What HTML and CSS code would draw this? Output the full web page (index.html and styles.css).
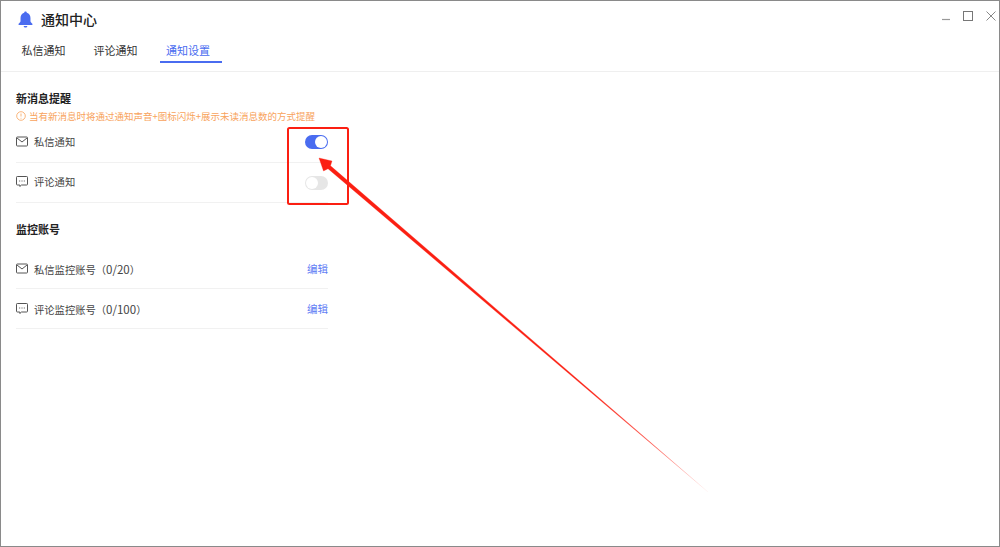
FILE: index.html
```html
<!DOCTYPE html>
<html lang="zh-CN">
<head>
<meta charset="utf-8">
<title>通知中心</title>
<link rel="stylesheet" href="styles.css">
</head>
<body>
<div class="window">
  <header class="header">
    <div class="titlebar">
      <div class="brand">
        <svg class="bell" viewBox="0 0 16 18"><path d="M8 0.500c.8 0 1.300.5 1.400 1.200C12 2.400 13.300 4.600 13.300 7.300v3.400c0 1 .8 1.900 2 2.900.5.500.2 1.200-.5 1.200H1.200c-.7 0-1-.7-.5-1.200 1.200-1 2-1.900 2-2.900V7.300c0-2.700 1.300-4.900 3.900-5.600C6.700 1 7.200.5 8 .5z" fill="#4a6cf0"/><path d="M6 15.800h4c-.2 1-1 1.700-2 1.700s-1.800-.7-2-1.700z" fill="#4a6cf0"/></svg>
        <span class="title">通知中心</span>
      </div>
      <div class="controls">
        <svg class="ctl" viewBox="0 0 10 10"><path d="M1 8.500h8" stroke="#999" stroke-width="1.200"/></svg>
        <svg class="ctl ctl-max" viewBox="0 0 10 10"><rect x=".5" y=".5" width="9" height="9" fill="none" stroke="#777"/></svg>
        <svg class="ctl" viewBox="0 0 10 10"><path d="M.5 .5l9 9M9.500 .5l-9 9" stroke="#888" fill="none"/></svg>
      </div>
    </div>
    <nav class="tabs">
      <span class="tab">私信通知</span>
      <span class="tab">评论通知</span>
      <span class="tab active">通知设置</span>
    </nav>
  </header>
  <main class="content">
    <section class="section-a">
      <h2 class="heading">新消息提醒</h2>
      <p class="notice">
        <svg class="notice-icon" viewBox="0 0 10 10"><circle cx="5" cy="5" r="4.300" fill="none" stroke="#f8a35c" stroke-width=".8"/><path d="M5 2.500v3M5 6.800v.8" stroke="#f8a35c" stroke-width=".8"/></svg>
        当有新消息时将通过通知声音+图标闪烁+展示未读消息数的方式提醒
      </p>
      <div class="row row-a">
        <div class="label">
          <svg class="icon" viewBox="0 0 12 10"><rect x=".5" y=".5" width="11" height="9" rx=".8" fill="none" stroke="#555"/><path d="M1 1.500l5 4 5-4" fill="none" stroke="#555"/></svg>
          <span>私信通知</span>
        </div>
        <span class="switch on"><i class="knob"></i></span>
      </div>
      <div class="row row-a">
        <div class="label">
          <svg class="icon" viewBox="0 0 12 11"><path d="M1.300 .5h9.400a.8.8 0 0 1 .8.8v6.900a.8.8 0 0 1-.8.8H5.500L3.800 10.500V9H1.300a.8.8 0 0 1-.8-.8V1.300a.8.8 0 0 1 .8-.8z" fill="none" stroke="#555"/><path d="M3.200 5h1M5.500 5h1M7.800 5h1" stroke="#555"/></svg>
          <span>评论通知</span>
        </div>
        <span class="switch"><i class="knob"></i></span>
      </div>
    </section>
    <section class="section-b">
      <h2 class="heading">监控账号</h2>
      <div class="rows-b">
        <div class="row row-b">
          <div class="label">
            <svg class="icon" viewBox="0 0 12 10"><rect x=".5" y=".5" width="11" height="9" rx=".8" fill="none" stroke="#555"/><path d="M1 1.500l5 4 5-4" fill="none" stroke="#555"/></svg>
            <span>私信监控账号（<span class="count">0/20</span>）</span>
          </div>
          <a class="edit">编辑</a>
        </div>
        <div class="row row-b">
          <div class="label">
            <svg class="icon" viewBox="0 0 12 11"><path d="M1.300 .5h9.400a.8.8 0 0 1 .8.8v6.900a.8.8 0 0 1-.8.8H5.500L3.800 10.500V9H1.300a.8.8 0 0 1-.8-.8V1.300a.8.8 0 0 1 .8-.8z" fill="none" stroke="#555"/><path d="M3.200 5h1M5.500 5h1M7.800 5h1" stroke="#555"/></svg>
            <span>评论监控账号（<span class="count">0/100</span>）</span>
          </div>
          <a class="edit">编辑</a>
        </div>
      </div>
    </section>
  </main>
  <svg class="annotation" viewBox="0 0 1000 547" width="1000" height="547">
    <defs>
      <linearGradient id="fade" gradientUnits="userSpaceOnUse" x1="319" y1="158" x2="708" y2="492">
        <stop offset="0" stop-color="#fb1f12"/>
        <stop offset=".7" stop-color="#fb1f12"/>
        <stop offset=".85" stop-color="#fb1f12" stop-opacity=".75"/>
        <stop offset="1" stop-color="#fb1f12" stop-opacity=".05"/>
      </linearGradient>
    </defs>
    <rect x="288" y="128" width="60" height="76" rx="1.500" fill="none" stroke="#fb1f12" stroke-width="2"/>
    <path class="arrow" d="M319 158 L332 161 L330.500 165.800 L708 492 L328 168.700 L323.500 171 Z"/>
  </svg>
</div>
</body>
</html>
```

FILE: styles.css
```css
* { box-sizing: border-box; }
html, body { margin: 0; height: 100%; }
body {
  font-family: "Noto Sans CJK SC", "Noto Sans", sans-serif;
  background: #fff;
  color: #333;
}
.window {
  position: relative;
  width: 1000px;
  height: 547px;
  border: 1px solid #8a8a8a;
  overflow: hidden;
  background: #fff;
}
.header {
  height: 71px;
  border-bottom: 1px solid #efefef;
}
.titlebar {
  height: 38px;
  display: flex;
  justify-content: space-between;
  align-items: flex-start;
}
.brand {
  display: flex;
  align-items: flex-start;
  gap: 8px;
  padding: 8px 0 0 17px;
}
.bell { width: 15px; height: 17px; display: block; margin-top: 2px; }
.title { font-size: 14px; font-weight: 500; line-height: 16px; color: #222; margin-top: 2px; }
.controls {
  display: flex;
  gap: 12px;
  padding: 10px 3px 0 0;
}
.ctl { width: 10px; height: 10px; display: block; }
.ctl-max { margin-right: 1px; }
.tabs {
  display: flex;
  gap: 15px;
  padding-left: 14px;
}
.tab {
  width: 57px;
  text-align: center;
  font-size: 11px;
  line-height: 22px;
  height: 24px;
  color: #333;
}
.tab.active {
  width: 62px;
  margin-left: 1px;
  padding-right: 6px;
  color: #4a6cf0;
  border-bottom: 2px solid #4a6cf0;
}
.content {
  width: 312px;
  margin-left: 15px;
}
.heading {
  margin: 0;
  font-size: 11px;
  font-weight: 700;
  line-height: 16px;
  color: #222;
}
.section-a { padding-top: 18px; }
.notice {
  margin: 3px 0 0;
  display: flex;
  align-items: center;
  gap: 3px;
  font-size: 9.500px;
  line-height: 14px;
  white-space: nowrap;
  color: #f8a35c;
}
.notice-icon { width: 10px; height: 10px; flex: none; }
.row {
  display: flex;
  justify-content: space-between;
  align-items: center;
  border-bottom: 1px solid #f1f1f1;
}
.row-a { height: 40px; }
.row-a .label { padding-bottom: 2px; }
.section-a .notice + .row-a { height: 41px; margin-top: -1px; }
.row-b { height: 40px; }
.label {
  display: flex;
  align-items: center;
  gap: 6px;
  font-size: 10.300px;
  color: #444;
}
.count { font-size: 11.500px; }
.icon { width: 12px; height: 11px; flex: none; }
.switch {
  width: 23px;
  height: 14px;
  border-radius: 7px;
  background: #e6e6e6;
  padding: 1px;
  display: flex;
}
.knob {
  width: 12px;
  height: 12px;
  border-radius: 50%;
  background: #fff;
}
.switch.on { background: #4a6cf0; justify-content: flex-end; }
.section-b { padding-top: 18px; }
.rows-b { padding-top: 12px; }
.edit { font-size: 10.500px; color: #5f7df5; }
.annotation {
  position: absolute;
  left: -1px;
  top: -1px;
  pointer-events: none;
}
.arrow {
  fill: url(#fade);
  stroke: url(#fade);
  stroke-width: .3;
}
```
